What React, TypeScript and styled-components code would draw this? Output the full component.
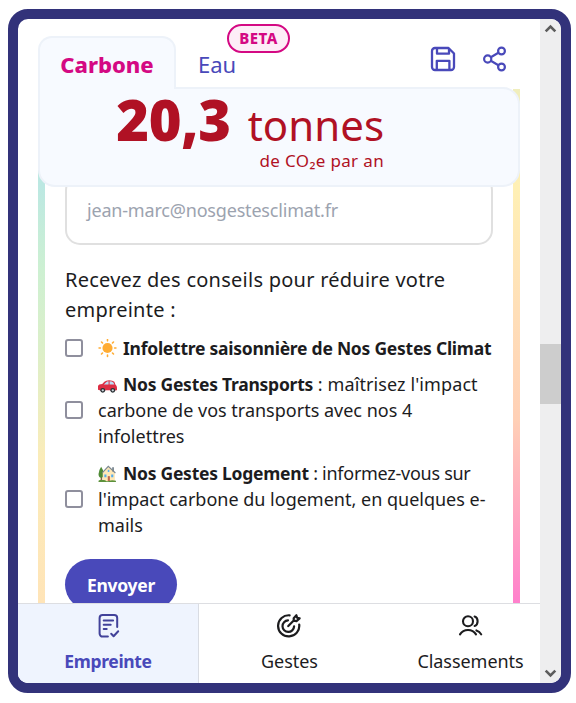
import React from 'react';
import styled, { createGlobalStyle } from 'styled-components';

const GlobalStyle = createGlobalStyle`
  * { box-sizing: border-box; }
  body { margin: 0; background: #fff; font-family: "Noto Sans", sans-serif; color: #1c1c1e; }
  svg { display: block; flex: none; }
  button { font: inherit; color: inherit; background: none; border: 0; padding: 0; }
`;

const Frame = styled.div`
  display: flex;
  width: 563px;
  height: 684px;
  margin: 9px 0 0 8px;
  border: 10px solid #32327a;
  border-radius: 20px;
  overflow: hidden;
  background: #fff;
`;

const Page = styled.div`
  display: flex;
  flex-direction: column;
  width: 522px;
  height: 664px;
  overflow: hidden;
`;

const Header = styled.header`
  position: relative;
  z-index: 1;
  flex: none;
  height: 168px;
  margin: 0 20px -98px;
  padding-top: 17px;
`;

const TabBar = styled.div`
  display: flex;
  align-items: flex-start;
  height: 51px;
`;

const Tab = styled.button<{ $active?: boolean }>`
  position: relative;
  z-index: 1;
  height: 53px;
  width: ${(p) => (p.$active ? '138px' : '84px')};
  padding: 4px 0 3px ${(p) => (p.$active ? '0' : '20px')};
  text-align: ${(p) => (p.$active ? 'center' : 'left')};
  background: ${(p) => (p.$active ? '#f7faff' : 'transparent')};
  border: 2px solid ${(p) => (p.$active ? '#edf2f9' : 'transparent')};
  border-bottom: 0;
  border-radius: 14px 14px 0 0;
  color: ${(p) => (p.$active ? '#d40983' : '#4949ba')};
  font-size: 22px;
  font-weight: ${(p) => (p.$active ? 800 : 400)};
  line-height: 44px;
`;

const Beta = styled.span`
  position: absolute;
  left: 49px;
  top: -14px;
  width: 63px;
  height: 29px;
  border: 2px solid #d40983;
  border-radius: 15px;
  background: #fdedf7;
  color: #d40983;
  font-size: 15px;
  font-weight: 800;
  line-height: 24px;
  letter-spacing: 0.5px;
  text-align: center;
`;

const Actions = styled.div`
  display: flex;
  gap: 26px;
  margin: 10px 13px 0 auto;
  color: #4949ba;
`;

const Total = styled.div`
  height: 100px;
  padding-right: 134px;
  border: 2px solid #edf2f9;
  border-radius: 0 17px 17px 17px;
  background: #f7faff;
  color: #b01124;
  text-align: right;
  white-space: nowrap;
`;

const Amount = styled.div`
  display: flex;
  align-items: baseline;
  justify-content: flex-end;
  height: 60px;
  line-height: 60px;
`;

const Value = styled.strong`
  font-size: 56px;
  font-weight: 900;
  letter-spacing: -0.3px;
  margin-right: 17px;
`;

const Unit = styled.span`
  font-size: 42px;
`;

const Period = styled.div`
  font-size: 17px;
  line-height: 24px;
  letter-spacing: 0.35px;
`;

const Scroll = styled.main`
  display: grid;
  grid-template-columns: 7px 1fr 7px;
  height: 514px;
  flex: none;
  margin: 0 20px;
  overflow: hidden;
`;

const Stripe = styled.i<{ $stops: string }>`
  background: linear-gradient(180deg, ${(p) => p.$stops});
`;

const Form = styled.form`
  padding: 86px 20px 0;
  white-space: nowrap;
`;

const EmailField = styled.div`
  height: 70px;
  padding: 14px 20px 0;
  border: 2px solid #e0e0e0;
  border-radius: 15px;
  color: #9ca3af;
  font-size: 18px;
  line-height: 38px;
  letter-spacing: -0.19px;
`;

const Intro = styled.p`
  margin: 20px 0 10px;
  font-size: 20px;
  line-height: 30px;
  letter-spacing: 0.25px;
`;

const Option = styled.label`
  display: flex;
  align-items: center;
  margin-bottom: 10px;
  font-size: 18px;
  line-height: 26px;

  & + & {
    margin-bottom: 11px;
  }
`;

const Box = styled.span`
  flex: none;
  width: 18px;
  height: 18px;
  margin-right: 15px;
  border: 2px solid #8f8f9d;
  border-radius: 3px;
`;

const Strong = styled.b`
  font-size: 17.5px;
  letter-spacing: -0.25px;
`;

const Tracked = styled.span<{ $spacing: number }>`
  letter-spacing: ${(p) => p.$spacing}px;
`;

const Emoji = styled.span`
  display: inline-block;
  width: 19px;
  height: 19px;
  margin-right: 6px;
  vertical-align: -3px;
`;

const Submit = styled.button`
  width: 112px;
  height: 51px;
  margin-top: 10px;
  border-radius: 26px;
  background: #4949ba;
  color: #fff;
  font-size: 17.5px;
  font-weight: 700;
  letter-spacing: -0.3px;
`;

const Nav = styled.nav`
  display: grid;
  grid-template-columns: repeat(3, 181px);
  height: 81px;
  flex: none;
  border-top: 1px solid #dddee2;
  background: #fff;
`;

const NavItem = styled.div<{ $active?: boolean }>`
  display: flex;
  flex-direction: column;
  align-items: center;
  padding-top: 10px;
  border-right: ${(p) => (p.$active ? '1px solid #d9dce3' : '0')};
  background: ${(p) => (p.$active ? '#eff4fe' : 'transparent')};
  color: ${(p) => (p.$active ? '#4949ba' : '#1c1c1e')};
`;

const NavLabel = styled.span<{ $active?: boolean }>`
  margin-top: 10px;
  font-size: ${(p) => (p.$active ? '17.5px' : '18px')};
  font-weight: ${(p) => (p.$active ? 700 : 400)};
  letter-spacing: ${(p) => (p.$active ? '-0.35px' : '-0.05px')};
  line-height: 26px;
`;

const Scrollbar = styled.div`
  display: flex;
  flex-direction: column;
  align-items: center;
  width: 21px;
  background: #eeeeef;
`;

const Thumb = styled.div`
  width: 21px;
  height: 60px;
  margin: 305px 0 auto;
  background: #cdcdcd;
`;

const Chevron = ({ down }: { down?: boolean }) => (
  <svg width="21" height="20" viewBox="0 0 21 20" fill="none" stroke="#5c5c5c" strokeWidth="2.6">
    <path d={down ? 'M5.7 7.6l4.8 4.8 4.8-4.8' : 'M5.7 12.3l4.8-4.8 4.8 4.8'} />
  </svg>
);

const SaveIcon = () => (
  <svg width="26" height="26" viewBox="0 0 26 26" fill="none" stroke="currentColor" strokeWidth="2.3" strokeLinejoin="round">
    <path d="M5 2h13.5L24 7.5V21a3 3 0 0 1-3 3H5a3 3 0 0 1-3-3V5a3 3 0 0 1 3-3z" />
    <path d="M7 2.5v5.2h12V2.8M6.8 23.5v-8.7h12.6v8.7" />
  </svg>
);

const ShareIcon = () => (
  <svg width="25" height="26" viewBox="0 0 25 26" fill="none" stroke="currentColor" strokeWidth="2.2">
    <circle cx="19.5" cy="5" r="3.4" />
    <circle cx="5.7" cy="13" r="3.6" />
    <circle cx="19.5" cy="21" r="3.4" />
    <path d="M8.8 11.2l7.6-4.4M8.8 14.8l7.6 4.4" />
  </svg>
);

const ReportIcon = () => (
  <svg width="24" height="24" viewBox="0 0 24 24" fill="none" stroke="#42429a" strokeWidth="2" strokeLinecap="round" strokeLinejoin="round">
    <path d="M11.9 22.6H6.6a3 3 0 0 1-3-3V4a3 3 0 0 1 3-3h11.6a3 3 0 0 1 3 3v9" />
    <path d="M7.7 6.5h9.4M7.7 10.7h7M7.7 14.9h3M15.2 19.8l2.4 2.4 4.6-5" />
  </svg>
);

const TargetIcon = () => (
  <svg width="26" height="24" viewBox="0 0 26 24" fill="none" stroke="#1c1c1e" strokeWidth="2.2" strokeLinecap="round" strokeLinejoin="round">
    <path d="M12.6 1.3a10.6 10.6 0 1 0 9.6 9.2" />
    <path d="M11 6.3a5.8 5.8 0 1 0 6.1 6.1" />
    <path d="M11.3 12.1l5.4-5.5M16.7 6.6V4.2L19.4 1.2l.7 2.5 2.5.7-3.1 2.7z" />
  </svg>
);

const PeopleIcon = () => (
  <svg width="26" height="24" viewBox="0 0 26 24" fill="none" stroke="#1c1c1e" strokeWidth="2.1" strokeLinecap="round">
    <circle cx="10" cy="7.2" r="5" />
    <path d="M16.6 2.6c4 1.2 4 8.2 0 9.4M2 20.4c3.6-5.8 12.4-5.8 16 0M18.4 16.4c2.2.7 3.8 2 4.8 4" />
  </svg>
);

const Sun = () => (
  <svg width="19" height="19" viewBox="0 0 36 36">
    <circle cx="18" cy="17" r="9.6" fill="#ffac33" />
    <path d="M18 1v2.5M18 30.5V33M2 17h2.5M31.5 17H34M6.7 5.7l1.8 1.8M27.5 26.5l1.8 1.8M29.3 5.7l-1.8 1.8M8.5 26.5l-1.8 1.8" stroke="#ffac33" strokeWidth="3" strokeLinecap="round" />
  </svg>
);

const Car = () => (
  <svg width="19" height="19" viewBox="0 0 36 36">
    <path d="M0 28v-7q1-4 8-4l4-4q3-3 9-3 7 0 10 3l2 5q3 3 3 6v5H3z" fill="#dd2e44" />
    <path d="M11 18l4-4q2-2 5-2v6zM22 12q5 0 7 2l2 4h-9z" fill="#bbddf5" />
    <circle cx="9" cy="29" r="4.6" fill="#292f33" />
    <circle cx="28" cy="29" r="4.6" fill="#292f33" />
    <circle cx="9" cy="29" r="2.2" fill="#ccd6dd" />
    <circle cx="28" cy="29" r="2.2" fill="#ccd6dd" />
  </svg>
);

const House = () => (
  <svg width="19" height="19" viewBox="0 0 36 36">
    <path d="M5 24h3v9H5z" fill="#8b5e3c" />
    <path d="M6 5q5 7 5 14 0 7-5 7t-5-7Q1 12 6 5z" fill="#4f8a35" />
    <path d="M9 16L20 5l12 11v17H9z" fill="#ffe8b6" />
    <path d="M27 6h3v8h-3z" fill="#66757f" />
    <path d="M8 17L19.5 4.5 33 17" fill="none" stroke="#7b8790" strokeWidth="2.2" />
    <path d="M12 20h4v5h-4zM25 20h4v5h-4zM18.5 11h3v4h-3z" fill="#55acee" />
    <path d="M18.5 23h4v10h-4z" fill="#c1694f" />
    <path d="M1 31.5q4-3 8-1 4-1 7 2h4q5-3 14-1v2.5H1z" fill="#5c913b" />
  </svg>
);

export default function App() {
  return (
    <>
      <GlobalStyle />
      <Frame>
        <Page>
          <Header>
            <TabBar>
              <Tab $active>Carbone</Tab>
              <Tab>
                Eau
                <Beta>BETA</Beta>
              </Tab>
              <Actions>
                <SaveIcon />
                <ShareIcon />
              </Actions>
            </TabBar>
            <Total>
              <Amount>
                <Value>20,3</Value>
                <Unit>tonnes</Unit>
              </Amount>
              <Period>de CO₂e par an</Period>
            </Total>
          </Header>
          <Scroll>
            <Stripe $stops="#bce8e2 98px, #cdf0d2 180px, #dcefc9 260px, #fbecb9 370px, #ffe4b8 514px" />
            <Form>
              <EmailField>jean-marc@nosgestesclimat.fr</EmailField>
              <Intro>
                Recevez des conseils pour réduire votre
                <br />
                empreinte :
              </Intro>
              <Option>
                <Box />
                <span>
                  <Emoji><Sun /></Emoji>
                  <Strong>Infolettre saisonnière de Nos Gestes Climat</Strong>
                </span>
              </Option>
              <Option>
                <Box />
                <span>
                  <Emoji><Car /></Emoji>
                  <Strong>Nos Gestes Transports</Strong>
                  <Tracked $spacing={0.1}> : maîtrisez l'impact</Tracked>
                  <br />
                  carbone de vos transports avec nos 4
                  <br />
                  infolettres
                </span>
              </Option>
              <Option>
                <Box />
                <span>
                  <Emoji><House /></Emoji>
                  <Strong>Nos Gestes Logement</Strong>
                  <Tracked $spacing={-0.27}> : informez-vous sur</Tracked>
                  <br />
                  l'impact carbone du logement, en quelques e-
                  <br />
                  mails
                </span>
              </Option>
              <Submit type="button">Envoyer</Submit>
            </Form>
            <Stripe $stops="#f0eebd 0px, #fff0b5 98px, #ffdfb8 220px, #ffd0b6 330px, #ff9cc3 450px, #ff80cc 514px" />
          </Scroll>
          <Nav>
            <NavItem $active>
              <ReportIcon />
              <NavLabel $active>Empreinte</NavLabel>
            </NavItem>
            <NavItem>
              <TargetIcon />
              <NavLabel>Gestes</NavLabel>
            </NavItem>
            <NavItem>
              <PeopleIcon />
              <NavLabel>Classements</NavLabel>
            </NavItem>
          </Nav>
        </Page>
        <Scrollbar>
          <Chevron />
          <Thumb />
          <Chevron down />
        </Scrollbar>
      </Frame>
    </>
  );
}
